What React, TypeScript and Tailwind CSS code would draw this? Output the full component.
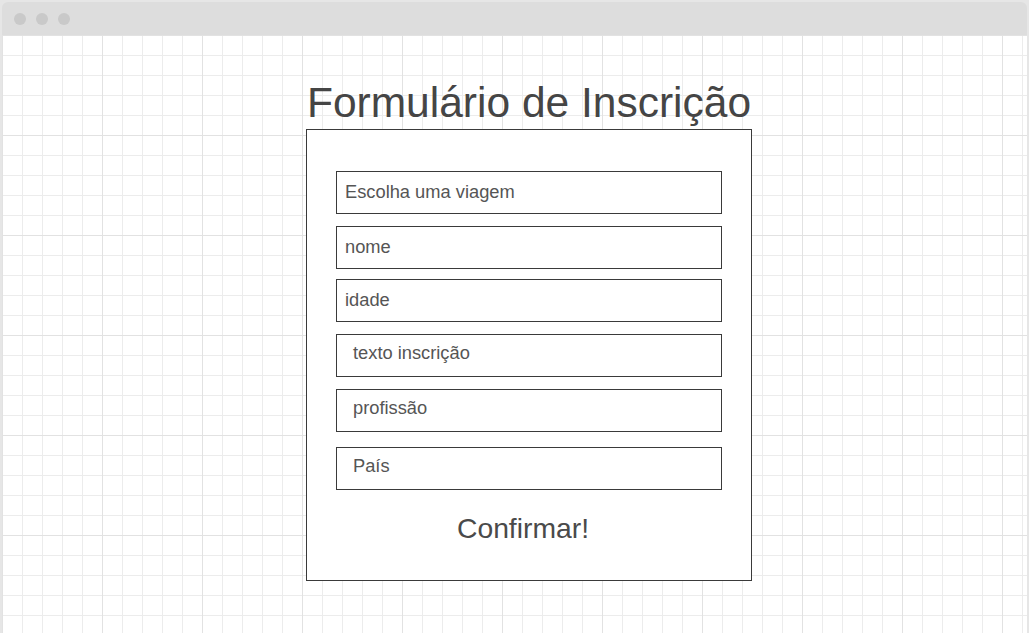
const fields = [
  { label: 'Escolha uma viagem', mt: 'mt-0', pad: 'pl-[8px] pb-[2px]' },
  { label: 'nome', mt: 'mt-[12px]', pad: 'pl-[8px] pb-[2px]' },
  { label: 'idade', mt: 'mt-[10px]', pad: 'pl-[8px] pb-[2px]' },
  { label: 'texto inscrição', mt: 'mt-[12px]', pad: 'pl-[16px] pb-[6px]' },
  { label: 'profissão', mt: 'mt-[12px]', pad: 'pl-[16px] pb-[6px]' },
  { label: 'País', mt: 'mt-[15px]', pad: 'pl-[16px] pb-[6px]' },
];

export default function App() {
  return (
    <div className="w-[1029px] h-[633px] bg-[#e6e6e6] px-[2px] pt-[2px] overflow-hidden font-['Liberation_Sans',Arial,sans-serif]">
      <div className="flex flex-col h-full rounded-t-[6px] overflow-hidden">
        {/* Window bar */}
        <div className="h-[33px] shrink-0 bg-[#dddddd] flex items-center pl-[12px] gap-[10px]">
          <span className="w-[12px] h-[12px] rounded-full bg-[#c9c9c9]" />
          <span className="w-[12px] h-[12px] rounded-full bg-[#c9c9c9]" />
          <span className="w-[12px] h-[12px] rounded-full bg-[#c9c9c9]" />
        </div>

        {/* Canvas */}
        <div className="flex-1 bg-white [background-image:linear-gradient(to_right,#e2e2e2_1px,transparent_1px),linear-gradient(to_bottom,#e2e2e2_1px,transparent_1px),linear-gradient(to_right,#ececec_1px,transparent_1px),linear-gradient(to_bottom,#ececec_1px,transparent_1px)] [background-size:100px_100px,100px_100px,20px_20px,20px_20px]">
          <div className="ml-[304px] w-[446px] pt-[47px]">
            <h1 className="text-[42.5px] leading-[42px] text-[#454545] text-center whitespace-nowrap h-[42px]">
              Formulário de Inscrição
            </h1>

            <div className="mt-[5px] h-[452px] bg-white border border-[#3a3a3a] px-[29px] pt-[41px]">
              {fields.map(f => (
                <div
                  key={f.label}
                  className={`${f.mt} ${f.pad} h-[43px] border border-[#3a3a3a] flex items-center text-[18.3px] text-[#555555]`}
                >
                  {f.label}
                </div>
              ))}

              <div className="mt-[24px] pr-[12px] flex justify-center text-[28.3px] leading-[28px] text-[#4a4a4a]">
                Confirmar!
              </div>
            </div>
          </div>
        </div>
      </div>
    </div>
  );
}
